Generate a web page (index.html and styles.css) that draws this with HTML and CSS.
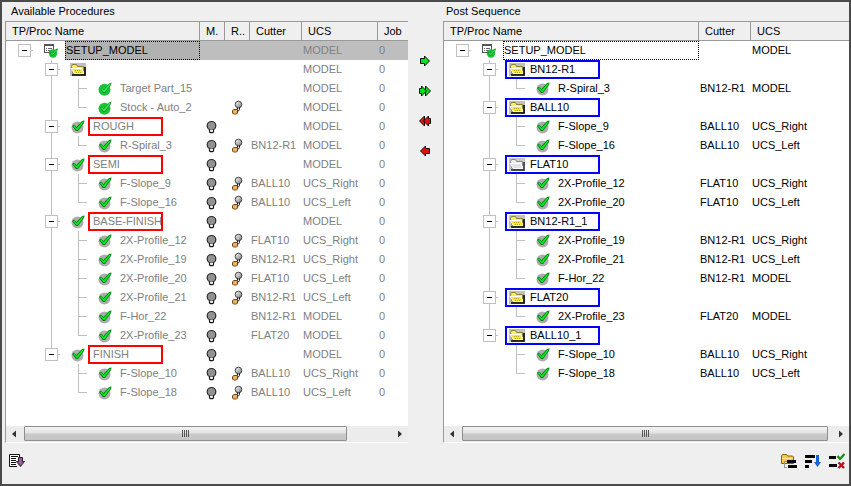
FILE: index.html
```
<!DOCTYPE html>
<html lang="en">
<head>
<meta charset="UTF-8">
<meta name="viewport" content="width=device-width, initial-scale=1.0">
<title>Post Process</title>
<link rel="stylesheet" href="styles.css">
</head>
<body>

<!-- Icon set -->
<svg class="icon-defs" width="0" height="0" aria-hidden="true">
  <defs>
    <linearGradient id="ball" x1="0" y1="0" x2="1" y2="1">
      <stop offset="0" stop-color="#fff"/>
      <stop offset="1" stop-color="#777"/>
    </linearGradient>
  </defs>
  <symbol id="check" viewBox="0 0 16 16">
    <circle cx="7.5" cy="8.5" r="6" fill="#adadad"/>
    <path d="M2 7 L4 5.5 L6.5 8 L12 2 L14.5 1.5 L14 4 L8 12 L6 12 Z" fill="#087a18"/>
    <path d="M3 7 L4.3 6.3 L6.6 9.2 L12 3 L13.7 2.3 L13 4 L7.7 10.9 L6.4 10.9 Z" fill="#00f01e"/>
  </symbol>
  <symbol id="check-full" viewBox="0 0 16 16">
    <circle cx="7.5" cy="8.8" r="6" fill="#1cc23a"/>
    <path d="M3 8 L4.5 6.5 L6.5 8.5 L12 2.5 L14.5 1.5 L14 4 L8 12 L6 12 Z" fill="#0c9a28"/>
    <path d="M4 8 L4.8 7.3 L6.7 9.4 L12 3.4 L13.7 2.3 L13 4 L7.7 10.9 L6.4 10.9 Z" fill="#3df05a"/>
  </symbol>
  <symbol id="setup" viewBox="0 0 16 16">
    <rect x="1.5" y="1.5" width="9" height="8" fill="#fff" stroke="#555"/>
    <path d="M1 2.5H11" stroke="#555" stroke-width="1"/>
    <path d="M3 5.5H4M5 5.5H9M3 7.5H4M5 7.5H9" stroke="#666"/>
    <circle cx="10" cy="10.5" r="4.2" fill="#1cc23a"/>
    <path d="M6 9 L7 8 L9 10 L13 6 L15 5.5 L14.5 7.5 L10 13 L8.5 13 Z" fill="#0c9a28"/>
    <path d="M7 9 L9 11 L13.5 6.7 L14 7.2 L9.7 12 L8.7 12 Z" fill="#3df05a"/>
  </symbol>
  <symbol id="folder" viewBox="0 0 16 16">
    <rect x="0" y="1" width="16" height="13" fill="#c0c0c0"/>
    <path d="M1.5 4.5 L2.5 2.5 H6.5 L7.5 4.5 H13.5 V12 H3 Z" fill="#f8f05a" stroke="#8a8433"/>
    <path d="M1 6.5 H11.5 L14.5 11.5 H4.5 Z" fill="#f6e733" stroke="#fff"/>
    <path d="M2 13H15V5" fill="none" stroke="#000" stroke-width="1.6"/>
    <path d="M5 8.5H11M6 10.5H12" stroke="#b5a41a" stroke-dasharray="1 1"/>
  </symbol>
  <symbol id="folder-grey" viewBox="0 0 16 16">
    <rect x="0" y="1" width="16" height="13" fill="#c8c8c8"/>
    <path d="M1.5 4.5 L2.5 2.5 H6.5 L7.5 4.5 H13.5 V12 H3 Z" fill="#eee" stroke="#888"/>
    <path d="M1 6.5 H11.5 L14.5 11.5 H4.5 Z" fill="#e2e2e2" stroke="#fff"/>
    <path d="M2 13H15V5" fill="none" stroke="#222" stroke-width="1.4"/>
  </symbol>
  <symbol id="bulb" viewBox="0 0 16 16">
    <rect x="5.5" y="10" width="4" height="3.6" rx="1" fill="#eee" stroke="#111" stroke-width="1.2"/>
    <circle cx="7.5" cy="6.8" r="4.3" fill="#929292" stroke="#2b2b2b" stroke-width="1.2"/>
    <path d="M6 11.5H9" stroke="#eee" stroke-width="1.4"/>
  </symbol>
  <symbol id="ref" viewBox="0 0 16 16">
    <path d="M8.5 7V9.5L7.5 10.5M10.5 7V9.5L9 11.5" fill="none" stroke="#111"/>
    <circle cx="9.5" cy="4.5" r="3.3" fill="url(#ball)" stroke="#333" stroke-width=".9"/>
    <path d="M3.5 10.5L5 9.5H8.5V13L7.5 14H4.5L3.5 13Z" fill="#ffc677" stroke="#74430a"/>
    <path d="M5 11H7.2V13H5Z" fill="#fff0d2" stroke="#c07a2a" stroke-width=".6"/>
  </symbol>
  <symbol id="arrow" viewBox="0 0 16 16">
    <path d="M3.5 5.5H7.5V3L12.5 8L7.5 13V10.5H3.5Z" fill="currentColor" stroke="#111"/>
  </symbol>
  <symbol id="arrow-double" viewBox="0 0 16 16">
    <path d="M8.5 3L13.5 8L8.5 13Z" fill="currentColor" stroke="#111"/>
    <path d="M2.5 5.5H4.5V3L9.5 8L4.5 13V10.5H2.5Z" fill="currentColor" stroke="#111"/>
  </symbol>
  <symbol id="list-down" viewBox="0 0 16 16">
    <path d="M10.5 5V1.5H.5V13.5H8" fill="#fff" stroke="#111"/>
    <path d="M2 3.5H9M2 5.5H7M2 7.5H7M2 9.5H7M2 11.5H7" stroke="#111"/>
    <path d="M9.5 4.5H13.5V8.5H15.5L11.5 13.5L7.5 8.5H9.5Z" fill="#9a5aa0" stroke="#222"/>
  </symbol>
  <symbol id="folder-tree" viewBox="0 0 16 16">
    <path d="M.5 3L1.5 1.5H5.5L6.5 3H11.5L12.5 4V10.5H.5Z" fill="#f8c842" stroke="#8a6200"/>
    <path d="M1 5.5H12" stroke="#ffe9a0"/>
    <path d="M3.5 14.5V8M3 8.5H6M3 14.5H6" stroke="#999"/>
    <path d="M6 7H15V10H6ZM7 12H16V15H7Z" fill="#000"/>
  </symbol>
  <symbol id="sort" viewBox="0 0 16 16">
    <path d="M0 2H10V5H0ZM0 7H7V10H0ZM0 12H4V15H0Z" fill="#000"/>
    <path d="M11 2H14V9H16L12.5 14L9 9H11Z" fill="#1765d8"/>
  </symbol>
  <symbol id="validate" viewBox="0 0 16 16">
    <path d="M0 3H7V6H0ZM0 11H8V14H0Z" fill="#000"/>
    <path d="M8.5 3L11 6L15.5 1" fill="none" stroke="#0a8a14" stroke-width="2"/>
    <path d="M9.5 9.5L15 15M15 9.5L9.5 15" stroke="#c40d18" stroke-width="2.4"/>
  </symbol>
  <symbol id="tri" viewBox="0 0 16 16">
    <path d="M10 4.5V11.5L6 8Z" fill="#333"/>
  </symbol>
</svg>

<div class="window">
  <section class="panel">
    <h2>Available Procedures</h2>
    <div class="list">
      <table class="available">
        <thead>
          <tr>
            <th class="col-name">TP/Proc Name</th>
            <th class="col-flag">M.</th>
            <th class="col-flag">R..</th>
            <th class="col-cutter">Cutter</th>
            <th class="col-ucs">UCS</th>
            <th>Job</th>
          </tr>
        </thead>
        <tbody id="available-body"></tbody>
      </table>
      <div class="scrollbar">
        <button type="button" aria-label="Scroll left"><svg><use href="#tri"/></svg></button>
        <div class="track"><div class="thumb partial"><i></i><i></i><i></i><i></i></div></div>
        <button type="button" class="flip" aria-label="Scroll right"><svg><use href="#tri"/></svg></button>
      </div>
    </div>
    <div class="tools">
      <button type="button" aria-label="Post list"><svg><use href="#list-down"/></svg></button>
    </div>
  </section>

  <div class="transfer">
    <button type="button" class="add" aria-label="Add"><svg><use href="#arrow"/></svg></button>
    <button type="button" class="add" aria-label="Add all"><svg><use href="#arrow-double"/></svg></button>
    <button type="button" class="remove" aria-label="Remove all"><svg><use href="#arrow-double"/></svg></button>
    <button type="button" class="remove" aria-label="Remove"><svg><use href="#arrow"/></svg></button>
  </div>

  <section class="panel">
    <h2>Post Sequence</h2>
    <div class="list">
      <table class="sequence">
        <thead>
          <tr>
            <th class="col-name">TP/Proc Name</th>
            <th class="col-cutter">Cutter</th>
            <th>UCS</th>
          </tr>
        </thead>
        <tbody id="sequence-body"></tbody>
      </table>
      <div class="scrollbar">
        <button type="button" aria-label="Scroll left"><svg><use href="#tri"/></svg></button>
        <div class="track"><div class="thumb"><i></i><i></i><i></i><i></i></div></div>
        <button type="button" class="flip" aria-label="Scroll right"><svg><use href="#tri"/></svg></button>
      </div>
    </div>
    <div class="tools right">
      <button type="button" aria-label="Group by folder"><svg><use href="#folder-tree"/></svg></button>
      <button type="button" aria-label="Sort"><svg><use href="#sort"/></svg></button>
      <button type="button" aria-label="Validate"><svg><use href="#validate"/></svg></button>
    </div>
  </section>
</div>

<script>
  // level, icon, name, M flag, R flag, cutter, ucs
  const available = [
    [0, 'setup', 'SETUP_MODEL', 0, 0, '', 'MODEL'],
    [1, 'folder', '', 0, 0, '', 'MODEL'],
    [2, 'check-full', 'Target Part_15', 0, 0, '', 'MODEL'],
    [2, 'check-full', 'Stock - Auto_2', 0, 1, '', 'MODEL'],
    [1, 'check', 'ROUGH', 1, 0, '', 'MODEL'],
    [2, 'check', 'R-Spiral_3', 1, 1, 'BN12-R1', 'MODEL'],
    [1, 'check', 'SEMI', 1, 0, '', 'MODEL'],
    [2, 'check', 'F-Slope_9', 1, 1, 'BALL10', 'UCS_Right'],
    [2, 'check', 'F-Slope_16', 1, 1, 'BALL10', 'UCS_Left'],
    [1, 'check', 'BASE-FINISH', 1, 0, '', 'MODEL'],
    [2, 'check', '2X-Profile_12', 1, 1, 'FLAT10', 'UCS_Right'],
    [2, 'check', '2X-Profile_19', 1, 1, 'BN12-R1', 'UCS_Right'],
    [2, 'check', '2X-Profile_20', 1, 1, 'FLAT10', 'UCS_Left'],
    [2, 'check', '2X-Profile_21', 1, 1, 'BN12-R1', 'UCS_Left'],
    [2, 'check', 'F-Hor_22', 1, 0, 'BN12-R1', 'MODEL'],
    [2, 'check', '2X-Profile_23', 1, 0, 'FLAT20', 'MODEL'],
    [1, 'check', 'FINISH', 1, 0, '', 'MODEL'],
    [2, 'check', 'F-Slope_10', 1, 1, 'BALL10', 'UCS_Right'],
    [2, 'check', 'F-Slope_18', 1, 1, 'BALL10', 'UCS_Left']
  ];

  // level, icon, name, cutter, ucs
  const sequence = [
    [0, 'setup', 'SETUP_MODEL', '', 'MODEL'],
    [1, 'folder', 'BN12-R1', '', ''],
    [2, 'check', 'R-Spiral_3', 'BN12-R1', 'MODEL'],
    [1, 'folder', 'BALL10', '', ''],
    [2, 'check', 'F-Slope_9', 'BALL10', 'UCS_Right'],
    [2, 'check', 'F-Slope_16', 'BALL10', 'UCS_Left'],
    [1, 'folder-grey', 'FLAT10', '', ''],
    [2, 'check', '2X-Profile_12', 'FLAT10', 'UCS_Right'],
    [2, 'check', '2X-Profile_20', 'FLAT10', 'UCS_Left'],
    [1, 'folder', 'BN12-R1_1', '', ''],
    [2, 'check', '2X-Profile_19', 'BN12-R1', 'UCS_Right'],
    [2, 'check', '2X-Profile_21', 'BN12-R1', 'UCS_Left'],
    [2, 'check', 'F-Hor_22', 'BN12-R1', 'MODEL'],
    [1, 'folder', 'FLAT20', '', ''],
    [2, 'check', '2X-Profile_23', 'FLAT20', 'MODEL'],
    [1, 'folder', 'BALL10_1', '', ''],
    [2, 'check', 'F-Slope_10', 'BALL10', 'UCS_Right'],
    [2, 'check', 'F-Slope_18', 'BALL10', 'UCS_Left']
  ];

  const icon = name => `<svg class="icon" aria-hidden="true"><use href="#${name}"/></svg>`;
  const toggle = '<button type="button" class="toggle" aria-label="Collapse"></button>';

  // Tree cell: guide slots, icon and label
  function treeCell(rows, i) {
    const [level, iconName, name] = rows[i];
    const moreGroups = rows.slice(i + 1).some(r => r[0] === 1);
    const lastChild = i + 1 >= rows.length || rows[i + 1][0] < 2;
    let slots = '';
    if (level === 0) {
      slots = `<span class="slot node">${toggle}</span>`;
    } else if (level === 1) {
      slots = `<span class="slot"></span><span class="slot node ${moreGroups ? 'tee' : 'elbow'}">${toggle}</span>`;
    } else {
      slots = `<span class="slot"></span><span class="slot ${moreGroups ? 'line' : ''}"></span><span class="slot ${lastChild ? 'elbow' : 'tee'}"></span>`;
    }
    const item = `<span class="slot item-icon">${icon(iconName)}</span><span class="label">${name}</span>`;
    return `<td class="level-${level}"><div class="tree">${slots}<span class="item ${name ? '' : 'unnamed'}">${item}</span></div></td>`;
  }

  document.getElementById('available-body').innerHTML = available.map((r, i) => `<tr>
    ${treeCell(available, i)}
    <td class="flag">${r[3] ? icon('bulb') : ''}</td>
    <td class="flag">${r[4] ? icon('ref') : ''}</td>
    <td>${r[5]}</td><td>${r[6]}</td><td>0</td></tr>`).join('');

  document.getElementById('sequence-body').innerHTML = sequence.map((r, i) => `<tr>
    ${treeCell(sequence, i)}
    <td>${r[3]}</td><td>${r[4]}</td></tr>`).join('');
</script>

</body>
</html>
```
FILE: styles.css
```
* {
  box-sizing: border-box;
}

body {
  margin: 0;
  font-family: "Liberation Sans", Arial, sans-serif;
  font-size: 11px;
  line-height: 19px;
  color: #000;
}

button {
  padding: 0;
  border: 0;
  background: none;
}

svg {
  display: block;
  width: 16px;
  height: 16px;
}

.icon-defs {
  position: absolute;
  width: 0;
  height: 0;
}

.window {
  display: grid;
  grid-template-columns: 403fr 35px 406fr;
  min-height: 100vh;
  padding-left: 3px;
  border: 2px solid #4a4a4a;
  background-color: #efefef;
}

.panel {
  display: flex;
  flex-direction: column;
  min-width: 0;
}

.panel h2 {
  margin: 0;
  padding: 0 4px 0 6px;
  font-size: 11px;
  font-weight: normal;
}

.panel:last-child h2 {
  padding-left: 3px;
}

.list {
  display: flex;
  flex: 1;
  flex-direction: column;
  justify-content: space-between;
  border-top: 1px solid #999;
  border-left: 1px solid #999;
  border-bottom: 1px solid #fff;
  background-color: #fff;
}

table {
  width: 100%;
  table-layout: fixed;
  border-collapse: separate;
  border-spacing: 0;
}

th, td {
  height: 19px;
  padding: 0 0 0 1px;
  text-align: left;
  font-weight: normal;
  white-space: nowrap;
}

th {
  padding-left: 6px;
  border-right: 1px solid #999;
  border-bottom: 1px solid #999;
  background-color: #efefef;
  line-height: 18px;
}

th:last-child {
  border-right: 0;
}

.available .col-name {
  width: 194px;
}

.sequence .col-name {
  width: 255px;
}

.col-flag {
  width: 25px;
}

.col-cutter {
  width: 52px;
}

.col-ucs {
  width: 76px;
}

.available td {
  color: #808080;
}

.available tbody tr:first-child td {
  background-color: #bebebe;
}

.flag {
  padding: 0 1px 0 0;
}

.flag .icon {
  margin: 0 auto;
}

/* Tree column */
td:first-child {
  padding: 0 0 0 5px;
}

.tree, .item {
  display: flex;
  align-items: center;
  height: 19px;
}

.slot {
  display: flex;
  flex: none;
  align-items: center;
  justify-content: center;
  width: 27px;
  height: 19px;
}

.line {
  background: linear-gradient(#c0c0c0, #c0c0c0) 13px 0 / 1px 100% no-repeat;
}

.tee {
  background: linear-gradient(#c0c0c0, #c0c0c0) 13px 0 / 1px 100% no-repeat, linear-gradient(#c0c0c0, #c0c0c0) 13px 9px / 9px 1px no-repeat;
}

.elbow {
  background: linear-gradient(#c0c0c0, #c0c0c0) 13px 0 / 1px 10px no-repeat, linear-gradient(#c0c0c0, #c0c0c0) 13px 9px / 9px 1px no-repeat;
}

.node:not(.tee):not(.elbow) {
  background: linear-gradient(#c0c0c0, #c0c0c0) 13px 9px / 9px 1px no-repeat;
}

.toggle {
  width: 13px;
  height: 13px;
  border: 1px solid #c0c0c0;
  background: #fff linear-gradient(#000, #000) center / 5px 1px no-repeat;
}

.item-icon {
  padding-right: 1px;
}

.label {
  padding-left: 1px;
}

/* Current row */
.level-0 .item {
  flex: 1;
}

.level-0 .label {
  flex: 1;
  height: 19px;
  padding-left: 0;
  border: 1px dotted #000;
  line-height: 17px;
}

.available .level-0 .label {
  background-color: #b2b2b2;
  color: #000;
}

.available tbody tr:first-child td.level-0 {
  background: linear-gradient(90deg, #fff 59px, #bebebe 59px);
}

/* Groups */
.available .level-1 .item:not(.unnamed) .label {
  width: 75px;
  height: 19px;
  margin-left: -4px;
  padding-left: 3px;
  border: 2px solid #f00;
  line-height: 15px;
}

.sequence .level-1 .item {
  width: 95px;
  margin-left: 2px;
  border: 2px solid #00f;
}

.sequence .level-1 .item .slot {
  width: 20px;
  height: 15px;
}

.sequence .level-1 .label {
  padding-left: 3px;
}

/* Scrollbar */
.scrollbar {
  display: flex;
  height: 16px;
  background-color: #ececec;
}

.scrollbar button {
  flex: none;
  width: 18px;
}

.flip {
  transform: scaleX(-1);
}

.track {
  flex: 1;
  padding-right: 3px;
}

.thumb {
  display: flex;
  align-items: center;
  justify-content: center;
  gap: 1px;
  height: 15px;
  border: 1px solid #8e8e8e;
  border-radius: 1px;
  background: linear-gradient(#f4f4f4, #e2e2e2 48%, #cacaca 52%, #c4c4c4);
}

.thumb.partial {
  width: 89%;
}

.thumb i {
  width: 1px;
  height: 7px;
  background-color: #555;
}

/* Middle buttons */
.transfer {
  display: flex;
  flex-direction: column;
  align-items: center;
  padding: 44px 2px 0 0;
}

.transfer button {
  height: 30px;
}

.add {
  color: #0be01c;
}

.remove {
  color: #e01010;
  transform: scaleX(-1);
}

.tools {
  display: flex;
  gap: 8px;
  height: 41px;
  padding: 10px 4px 0;
}

.tools button {
  height: 16px;
}

.tools.right {
  justify-content: flex-end;
}
```
